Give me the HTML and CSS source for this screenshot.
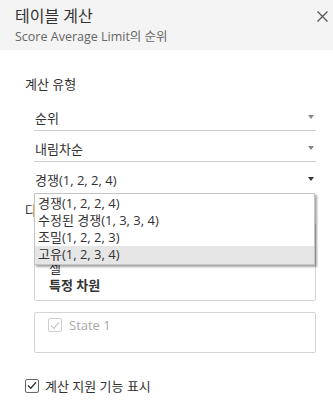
FILE: index.html
```html
<!DOCTYPE html>
<html lang="ko">
<head>
<meta charset="utf-8">
<link rel="stylesheet" href="styles.css">
</head>
<body>
<div class="panel">
  <div class="header">
    <div class="title">테이블 계산</div>
    <div class="subtitle">Score Average Limit의 순위</div>
    <svg class="close" width="11" height="11" viewBox="0 0 11 11"><path d="M0.5 0.5 L10.5 10.5 M10.5 0.5 L0.5 10.5" stroke="#555" stroke-width="1.3"/></svg>
  </div>
  <div class="content">
    <div class="label">계산 유형</div>
    <div class="selects">
      <div class="select"><span>순위</span><i class="arrow"></i></div>
      <div class="select"><span>내림차순</span><i class="arrow"></i></div>
      <div class="select open"><span>경쟁(1, 2, 2, 4)</span><i class="arrow dark"></i>
        <ul class="menu">
          <li>경쟁(1, 2, 2, 4)</li>
          <li>수정된 경쟁(1, 3, 3, 4)</li>
          <li>조밀(1, 2, 2, 3)</li>
          <li class="hover">고유(1, 2, 3, 4)</li>
        </ul>
      </div>
    </div>
    <div class="label compute">다음을 사용하여 계산</div>
    <div class="listbox">
      <div class="opt">셀</div>
      <div class="opt bold">특정 차원</div>
    </div>
    <div class="dimbox">
      <label class="dim"><span class="cb disabled"><svg width="10" height="9" viewBox="0 0 10 9"><path d="M1 4.5 L3.8 7.3 L9 1.3" fill="none" stroke="#c8c8c8" stroke-width="1.2"/></svg></span>State 1</label>
    </div>
    <label class="assist"><span class="cb"><svg width="10" height="9" viewBox="0 0 10 9"><path d="M1 4.5 L3.8 7.3 L9 1.3" fill="none" stroke="#333" stroke-width="1.3"/></svg></span>계산 지원 기능 표시</label>
  </div>
</div>
</body>
</html>
```

FILE: styles.css
```css
* { box-sizing: border-box; }
html, body { margin: 0; padding: 0; background: #fff; }
body {
  font-family: "Open Sans", "Noto Sans CJK KR", sans-serif;
  color: #333;
  width: 333px;
  height: 407px;
  overflow: hidden;
}
.header {
  position: relative;
  background: #f4f4f4;
  height: 50px;
  padding: 5px 15px 0;
}
.title {
  font-size: 16px;
  line-height: 22px;
  color: #333;
}
.subtitle {
  font-size: 12.5px;
  line-height: 18px;
  color: #666;
  margin-top: 1px;
}
.close {
  position: absolute;
  right: 5px;
  top: 11px;
}
.content {
  padding: 25px 17px 0 25px;
}
.label {
  font-size: 13px;
  line-height: 18px;
  color: #333;
}
.selects {
  margin-left: 9px;
  margin-top: 7px;
}
.select {
  position: relative;
  display: flex;
  align-items: center;
  justify-content: space-between;
  height: 31px;
  padding: 4px 1px 0 1px;
  border-bottom: 1px solid #cfcfcf;
  font-size: 13px;
  color: #333;
}
.select.open { border-bottom-color: transparent; }
.arrow {
  width: 0; height: 0;
  border-left: 3.5px solid transparent;
  border-right: 3.5px solid transparent;
  border-top: 4px solid #888;
  margin-right: 1px;
}
.arrow.dark { border-top-color: #333; }
.menu {
  position: absolute;
  left: 0;
  right: 1px;
  top: 31px;
  margin: 0;
  padding: 1px 0 0;
  list-style: none;
  background: #fff;
  border: 1px solid #c4c4c4;
  box-shadow: 2px 2px 2px rgba(0,0,0,0.35);
  z-index: 5;
}
.menu li {
  font-size: 13px;
  line-height: 17px;
  padding: 0 3px;
  color: #333;
}
.menu li.hover { background: #e6e6e6; padding-bottom: 1px; }
.label.compute { margin-top: 8px; }
.listbox {
  margin: 4px 0 0 9px;
  height: 78px;
  border: 1px solid #d4d4d4;
  border-radius: 2px;
  padding: 2px 0 0 14px;
  overflow: hidden;
  display: flex;
  flex-direction: column;
  justify-content: flex-end;
  padding-bottom: 6px;
}
.opt { font-size: 13px; line-height: 17px; color: #333; }
.opt.bold { font-weight: bold; }
.dimbox {
  margin: 11px 0 0 9px;
  height: 41px;
  border: 1px solid #d4d4d4;
  border-radius: 2px;
  padding: 3px 0 0 13px;
}
.dim {
  display: flex;
  align-items: center;
  font-size: 13px;
  color: #aaa;
}
.cb {
  display: inline-flex;
  align-items: center;
  justify-content: center;
  width: 14px;
  height: 14px;
  border: 1px solid #666;
  border-radius: 2px;
  margin-right: 7px;
  background: #fff;
}
.cb.disabled { border-color: #cfcfcf; }
.assist {
  display: flex;
  align-items: center;
  margin-top: 23px;
  font-size: 13px;
  color: #333;
}
.assist .cb { margin-right: 6px; }
```
